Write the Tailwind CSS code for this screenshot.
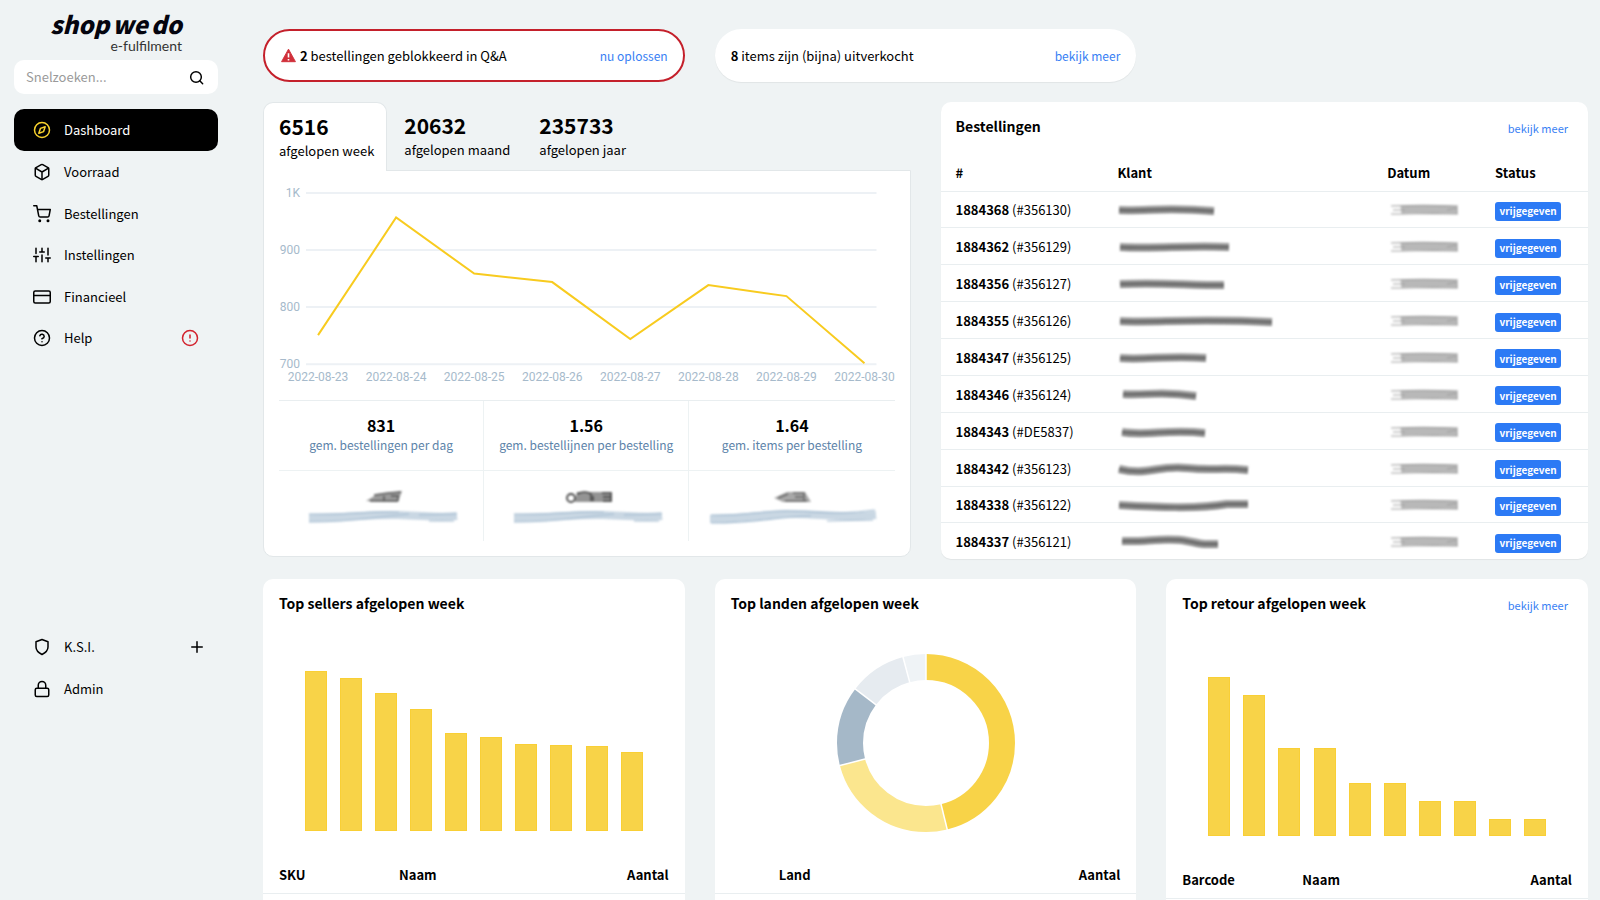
<!DOCTYPE html>
<html lang="nl">
<head>
<meta charset="utf-8">
<meta name="viewport" content="width=device-width, initial-scale=1">
<title>shop we do – Dashboard</title>
<script src="https://cdn.jsdelivr.net/npm/@tailwindcss/browser@4"></script>
</head>
<body class="flex min-h-screen bg-[#eff3f4] font-['Noto_Sans_CJK_SC','Noto_Sans',sans-serif] text-[13px] leading-5 text-black">

<aside class="flex w-[232px] shrink-0 flex-col px-[14px] pt-2">
  <a href="#" class="flex flex-col items-end pr-9">
    <span class="flex gap-[3px] text-[24px] leading-8 font-black italic text-[#05050f]"><span>shop</span><span>we</span><span>do</span></span>
    <span class="font-[Lato] text-[14px] leading-3 text-[#333]">e-fulfilment</span>
  </a>
  <form class="mt-2 flex h-[34px] items-center rounded-[10px] bg-white pr-[14px] pl-3">
    <input type="search" aria-label="Snelzoeken" placeholder="Snelzoeken..." class="min-w-0 flex-1 bg-transparent outline-none placeholder:text-[#9a9a9a]">
    <button type="submit" aria-label="Zoeken"><svg class="size-4" viewBox="0 0 24 24" fill="none" stroke="currentColor" stroke-width="2.2" stroke-linecap="round" stroke-linejoin="round"><circle cx="12" cy="12" r="8"/><path d="M22 22l-4.350-4.350"/></svg></button>
  </form>

  <nav class="mt-[15px] flex flex-col">
    <a href="#" class="flex h-[42px] items-center gap-[13px] rounded-[10px] bg-black px-[19px] text-white">
      <svg class="size-[18px] text-[#f8d22e]" viewBox="0 0 24 24" fill="none" stroke="currentColor" stroke-width="2" stroke-linecap="round" stroke-linejoin="round"><circle cx="12" cy="12" r="10"/><path d="M16.24 7.76l-2.12 6.36-6.36 2.12 2.12-6.36z"/></svg>
      <span>Dashboard</span></a>
    <a href="#" class="flex h-[42px] items-center gap-[13px] px-[19px]">
      <svg class="size-[18px]" viewBox="0 0 24 24" fill="none" stroke="currentColor" stroke-width="2" stroke-linecap="round" stroke-linejoin="round"><path d="M21 16V8a2 2 0 0 0-1-1.73l-7-4a2 2 0 0 0-2 0l-7 4A2 2 0 0 0 3 8v8a2 2 0 0 0 1 1.73l7 4a2 2 0 0 0 2 0l7-4A2 2 0 0 0 21 16z"/><path d="M3.27 6.96L12 12.01l8.73-5.05M12 22.08V12"/></svg>
      <span>Voorraad</span></a>
    <a href="#" class="flex h-[41px] items-center gap-[13px] px-[19px]">
      <svg class="size-[18px]" viewBox="0 0 24 24" fill="none" stroke="currentColor" stroke-width="2" stroke-linecap="round" stroke-linejoin="round"><circle cx="9" cy="21" r="1"/><circle cx="20" cy="21" r="1"/><path d="M1 1h4l2.68 13.39a2 2 0 0 0 2 1.61h9.72a2 2 0 0 0 2-1.61L23 6H6"/></svg>
      <span>Bestellingen</span></a>
    <a href="#" class="flex h-[42px] items-center gap-[13px] px-[19px]">
      <svg class="size-[18px]" viewBox="0 0 24 24" fill="none" stroke="currentColor" stroke-width="2" stroke-linecap="round" stroke-linejoin="round"><path d="M4 21v-7M4 10V3M12 21v-9M12 8V3M20 21v-5M20 12V3M1 14h6M9 8h6M17 16h6"/></svg>
      <span>Instellingen</span></a>
    <a href="#" class="flex h-[41px] items-center gap-[13px] px-[19px]">
      <svg class="size-[18px]" viewBox="0 0 24 24" fill="none" stroke="currentColor" stroke-width="2" stroke-linecap="round" stroke-linejoin="round"><rect x="1" y="4" width="22" height="16" rx="2"/><path d="M1 10h22"/></svg>
      <span>Financieel</span></a>
    <a href="#" class="flex h-[42px] items-center gap-[13px] px-[19px]">
      <svg class="size-[18px]" viewBox="0 0 24 24" fill="none" stroke="currentColor" stroke-width="2" stroke-linecap="round" stroke-linejoin="round"><circle cx="12" cy="12" r="10"/><path d="M9.09 9a3 3 0 0 1 5.83 1c0 2-3 3-3 3M12 17h.01"/></svg>
      <span class="flex-1">Help</span>
      <svg class="size-[18px] text-[#d2222d]" viewBox="0 0 24 24" fill="none" stroke="currentColor" stroke-width="2" stroke-linecap="round" stroke-linejoin="round"><circle cx="12" cy="12" r="10"/><path d="M12 8v4M12 16h.01"/></svg></a>
  </nav>

  <nav class="mt-auto mb-[190px] flex flex-col">
    <a href="#" class="flex h-[42px] items-center gap-[13px] pr-3 pl-[19px]">
      <svg class="size-[18px]" viewBox="0 0 24 24" fill="none" stroke="currentColor" stroke-width="2" stroke-linecap="round" stroke-linejoin="round"><path d="M12 22s8-4 8-10V5l-8-3-8 3v7c0 6 8 10 8 10z"/></svg>
      <span class="flex-1">K.S.I.</span>
      <svg class="size-[18px]" viewBox="0 0 24 24" fill="none" stroke="currentColor" stroke-width="2" stroke-linecap="round" stroke-linejoin="round"><path d="M12 5v14M5 12h14"/></svg></a>
    <a href="#" class="flex h-[42px] items-center gap-[13px] px-[19px]">
      <svg class="size-[18px]" viewBox="0 0 24 24" fill="none" stroke="currentColor" stroke-width="2" stroke-linecap="round" stroke-linejoin="round"><rect x="3" y="11" width="18" height="11" rx="2"/><path d="M7 11V7a5 5 0 0 1 10 0v4"/></svg>
      <span>Admin</span></a>
  </nav>
</aside>

<main class="flex min-w-0 flex-1 flex-col gap-5 pt-[29px] pr-3 pl-[31px]">

  <section class="grid grid-cols-3 gap-[30px]">
    <div class="flex h-[53px] items-center rounded-full border-2 border-[#c4202b] bg-white pr-[15px] pl-4">
      <svg class="mr-1 size-[15px]" viewBox="0 0 16 16"><path d="M8 1.2L15.4 14.6H.6z" fill="#d02f3a" stroke="#d02f3a" stroke-linejoin="round"/><path d="M8 5.6v4.6M8 11.6v1.7" stroke="#fff" stroke-width="1.7"/></svg>
      <p class="flex-1"><b>2</b> bestellingen geblokkeerd in Q&amp;A</p>
      <a href="#" class="text-[12px] text-[#3880f4]">nu oplossen</a>
    </div>
    <div class="flex h-[53px] items-center rounded-full bg-white px-4 shadow-[0_1px_1px_rgba(0,0,0,0.06)]">
      <p class="flex-1"><b>8</b> items zijn (bijna) uitverkocht</p>
      <a href="#" class="text-[12px] text-[#3880f4]">bekijk meer</a>
    </div>
  </section>

  <section class="grid grid-cols-2 items-start gap-[30px]">
    <div class="flex flex-col">
      <div class="flex">
        <button type="button" class="relative z-10 -mb-px h-[69px] rounded-t-[10px] border border-b-0 border-[#e2e7e9] bg-white pr-3 pl-[15px] text-left">
          <span class="block pb-[2px] text-[21px] leading-[26px] font-bold">6516</span><span class="block">afgelopen week</span></button>
        <button type="button" class="h-[68px] pr-3 pl-[17px] text-left"><span class="block pb-[2px] text-[21px] leading-[26px] font-bold">20632</span><span class="block">afgelopen maand</span></button>
        <button type="button" class="h-[68px] pr-3 pl-[17px] text-left"><span class="block pb-[2px] text-[21px] leading-[26px] font-bold">235733</span><span class="block">afgelopen jaar</span></button>
      </div>
      <div class="rounded-b-[10px] border border-[#e2e7e9] bg-white px-[15px] pt-[11px] pb-[15px]">
        <svg class="block h-auto w-full" viewBox="279 182 615 218" font-family="Roboto" font-size="12" fill="#a6bacb">
          <path d="M306 193h570M306 250h570M306 307h570M306 364h570" stroke="#edf1f5" stroke-width="2"/>
          <path d="M318 335L396 217.500L474 273.500L552 282L630 339L708 285L786 296L864 363" fill="none" stroke="#f8cb1f" stroke-width="2"/>
          <g text-anchor="end"><text x="300" y="197">1K</text><text x="300" y="254">900</text><text x="300" y="311">800</text><text x="300" y="368">700</text></g>
          <g text-anchor="middle"><text x="318" y="381">2022-08-23</text><text x="396" y="381">2022-08-24</text><text x="474" y="381">2022-08-25</text><text x="552" y="381">2022-08-26</text><text x="630" y="381">2022-08-27</text><text x="708" y="381">2022-08-28</text><text x="786" y="381">2022-08-29</text><text x="864" y="381">2022-08-30</text></g>
        </svg>
        <div class="grid grid-cols-3 divide-x divide-[#edf2f3] border-t border-[#e9eef0] text-center">
          <div class="h-[70px] border-b border-b-[#edf2f3] pt-[14px]"><b class="block text-[16px] leading-5">831</b><span class="block text-[12px] text-[#5c83a9]">gem. bestellingen per dag</span></div>
          <div class="h-[70px] border-b border-b-[#edf2f3] pt-[14px]"><b class="block text-[16px] leading-5">1.56</b><span class="block text-[12px] text-[#5c83a9]">gem. bestellijnen per bestelling</span></div>
          <div class="h-[70px] border-b border-b-[#edf2f3] pt-[14px]"><b class="block text-[16px] leading-5">1.64</b><span class="block text-[12px] text-[#5c83a9]">gem. items per bestelling</span></div>
        </div>
        <div class="grid grid-cols-3 divide-x divide-[#edf2f3]">
          <div class="flex h-[70px] items-start justify-center pt-4">
            <svg class="h-[42px] w-[170px] blur-[1px]" viewBox="0 0 170 42" fill="none">
              <path d="M70 14L80 8L106 4L102 15Z" fill="#9a9a9a" stroke="none"/><path d="M78 8l14-2 13-1M74 14h28M88 9v5M95 9h7v5" stroke="#5a5a5a" stroke-width="1.500"/>
              <g transform="translate(3 0)"><path d="M10 31c40 0 60-4 90-3s40 3 58 1" stroke="#c9d7e3" stroke-width="8"/><path d="M10 27c40 1 60-3 90-2M10 35c50 0 60-5 100-8M120 28l38-1M130 34h25" stroke="#a3bbd0" stroke-width="1.200"/></g>
            </svg></div>
          <div class="flex h-[70px] items-start justify-center pt-4">
            <svg class="h-[42px] w-[170px] blur-[1px]" viewBox="0 0 170 42" fill="none">
              <path d="M76 5h35v10H74z" fill="#949494" stroke="none"/><circle cx="70" cy="11" r="4" stroke="#444" stroke-width="1.800"/><path d="M76 7q8-4 14 0v7M92 9v5M101 6h9v8h-8M102 10h8" stroke="#444" stroke-width="1.500"/>
              <g transform="translate(3 0)"><path d="M10 31c40 0 60-4 90-3s40 3 58 1" stroke="#c9d7e3" stroke-width="8"/><path d="M10 27c40 1 60-3 90-2M10 35c50 0 60-5 100-8M120 28l38-1M130 34h25" stroke="#a3bbd0" stroke-width="1.200"/></g>
            </svg></div>
          <div class="flex h-[70px] items-start justify-center pt-4">
            <svg class="h-[42px] w-[170px] blur-[1px]" viewBox="0 0 170 42" fill="none">
              <path d="M67 11L80 5L98 5L104 15L76 15Z" fill="#a8a8a8" stroke="none"/><path d="M71 11l10-4M86 6h11v8M78 14h22M88 10h8" stroke="#666" stroke-width="1.500"/>
              <path d="M3 32c30 0 50-4 80-5s40 5 86 1" stroke="#c9d7e3" stroke-width="8"/><path d="M4 28c40 1 50-5 80-4s50 4 84-1M4 36c50 0 60-6 100-7M120 34l46-1" stroke="#a3bbd0" stroke-width="1.200"/>
            </svg></div>
        </div>
      </div>
    </div>

    <div class="overflow-hidden rounded-[10px] bg-white shadow-[0_1px_1px_rgba(0,0,0,0.06)]">
      <div class="flex h-[52px] items-center justify-between pr-5 pl-[15px]">
        <h2 class="pb-[5px] text-[14px] font-bold">Bestellingen</h2>
        <a href="#" class="text-[11px] text-[#3880f4]">bekijk meer</a>
      </div>
      <table class="h-[405px] w-full table-fixed text-left">
        <thead class="h-[37px]"><tr><th class="w-3/12 px-[15px] pt-[2px]">#</th><th class="w-5/12 px-[15px] pt-[2px]">Klant</th><th class="w-2/12 px-[15px] pt-[2px]">Datum</th><th class="w-2/12 px-[15px] pt-[2px]">Status</th></tr></thead>
        <tbody id="orders"></tbody>
      </table>
    </div>
  </section>

  <section class="grid flex-1 grid-cols-3 gap-[30px]">
    <div class="flex flex-col rounded-t-[10px] bg-white">
      <h2 class="px-4 pt-[14px] pb-px text-[14px] font-bold">Top sellers afgelopen week</h2>
      <div id="sellers" class="mt-[57px] flex h-[160px] items-end justify-between px-[42px]"></div>
      <table class="mt-[27px] w-full table-fixed text-left">
        <thead><tr class="h-[35px] border-b border-[#e9eef0]"><th class="w-[120px] pl-4">SKU</th><th class="pl-4">Naam</th><th class="w-[120px] pr-4 text-right">Aantal</th></tr></thead>
      </table>
    </div>
    <div class="flex flex-col rounded-t-[10px] bg-white">
      <h2 class="px-4 pt-[14px] pb-px text-[14px] font-bold">Top landen afgelopen week</h2>
      <svg class="mx-auto mt-[38px] size-[180px]" viewBox="-91 -91 180 180" fill="none" stroke-width="26" role="img" aria-label="Top landen">
        <g transform="rotate(-90)">
          <circle r="76" pathLength="360" stroke="#f8d348" stroke-dasharray="166.200 360"/>
          <circle r="76" pathLength="360" stroke="#fbe68e" stroke-dasharray="89.100 360" stroke-dashoffset="-166.200"/>
          <circle r="76" pathLength="360" stroke="#a5b8c8" stroke-dasharray="52.100 360" stroke-dashoffset="-255.300"/>
          <circle r="76" pathLength="360" stroke="#e6ebf0" stroke-dasharray="37.700 360" stroke-dashoffset="-307.400"/>
          <circle r="76" pathLength="360" stroke="#eff3f6" stroke-dasharray="15 360" stroke-dashoffset="-345"/>
          <g stroke="#fff" stroke-width="1.500"><path d="M62 0H90"/><path d="M62 0H90" transform="rotate(166.200)"/><path d="M62 0H90" transform="rotate(255.300)"/><path d="M62 0H90" transform="rotate(307.400)"/><path d="M62 0H90" transform="rotate(345)"/></g>
        </g>
      </svg>
      <table class="mt-[26px] w-full table-fixed text-left">
        <thead><tr class="h-[35px] border-b border-[#e9eef0]"><th class="pl-16">Land</th><th class="w-[120px] pr-4 text-right">Aantal</th></tr></thead>
      </table>
    </div>
    <div class="flex flex-col rounded-t-[10px] bg-white">
      <div class="flex justify-between pr-5 pl-4">
        <h2 class="pt-[14px] pb-px text-[14px] font-bold">Top retour afgelopen week</h2>
        <a href="#" class="pt-4 text-[11px] text-[#3880f4]">bekijk meer</a>
      </div>
      <div id="returns" class="mt-[61px] flex h-[160px] items-end justify-between px-[42px]"></div>
      <table class="mt-[27px] w-full table-fixed text-left">
        <thead><tr class="h-[35px] border-b border-[#e9eef0]"><th class="w-[120px] pl-4">Barcode</th><th class="pl-4">Naam</th><th class="w-[120px] pr-4 text-right">Aantal</th></tr></thead>
      </table>
    </div>
  </section>
</main>

<script>
// Each order: number, reference, centre line of the masked customer name.
const orders = [
  ['1884368', '#356130', 'M2 8C30 9 50 5 97 9'],
  ['1884362', '#356129', 'M3 8C40 10 70 6 112 8'],
  ['1884356', '#356127', 'M3 8C40 6 70 9 107 9'],
  ['1884355', '#356126', 'M3 8C40 10 70 5 155 9'],
  ['1884347', '#356125', 'M3 8C30 10 50 5 89 8'],
  ['1884346', '#356124', 'M6 7C30 9 40 3 79 9'],
  ['1884343', '#DE5837', 'M5 8C30 12 50 5 88 9'],
  ['1884342', '#356123', 'M2 8C30 15 40 4 70 7S100 6 131 9'],
  ['1884338', '#356122', 'M2 8C40 10 80 12 110 7L131 7'],
  ['1884337', '#356121', 'M5 7C30 8 50 3 70 7S85 10 101 10'],
];
document.getElementById('orders').innerHTML = orders.map(([id, ref, path]) => `
  <tr class="border-t border-[#e9eef0]">
    <td class="px-[15px] pt-[2px]"><b>${id}</b> (${ref})</td>
    <td class="px-[15px] pt-[2px]"><svg class="h-4 w-[170px] blur-[1px]" viewBox="0 0 170 16" fill="none"><path d="${path}" stroke="#9a9a9a" stroke-width="8"/><path d="${path}" stroke="#5c5c5c" stroke-width="2"/><path d="${path}" stroke="#777" stroke-width="1" transform="translate(0 3)"/></svg></td>
    <td class="px-[15px] pt-[2px]"><svg class="h-4 w-[78px] blur-[1px]" viewBox="0 0 78 16" fill="none"><path d="M14 8C30 6 50 7 70 8" stroke="#b8b8b8" stroke-width="8"/><path d="M4 4C30 3 40 3 71 4M6 8H18M4 12C30 12 45 11 71 12M60 8L70 6V12" stroke="#a0a0a0" stroke-width="1.200"/></svg></td>
    <td class="px-[15px] pt-[2px]"><span class="mt-[2px] flex h-[19px] w-[66px] items-center justify-center rounded-[3px] bg-[#2c7af5] text-[10px] font-bold text-white">vrijgegeven</span></td>
  </tr>`).join('');

const bars = (target, heights) => {
  document.getElementById(target).innerHTML = heights
    .map(h => `<div class="w-[22px] border border-[#f9cf35] bg-[#f8d348]" style="height:${h}px"></div>`).join('');
};
bars('sellers', [160, 153, 138, 122, 98, 94, 87, 86, 85, 79]);
bars('returns', [159, 141, 88, 88, 53, 53, 35, 35, 17, 17]);
</script>
</body>
</html>
